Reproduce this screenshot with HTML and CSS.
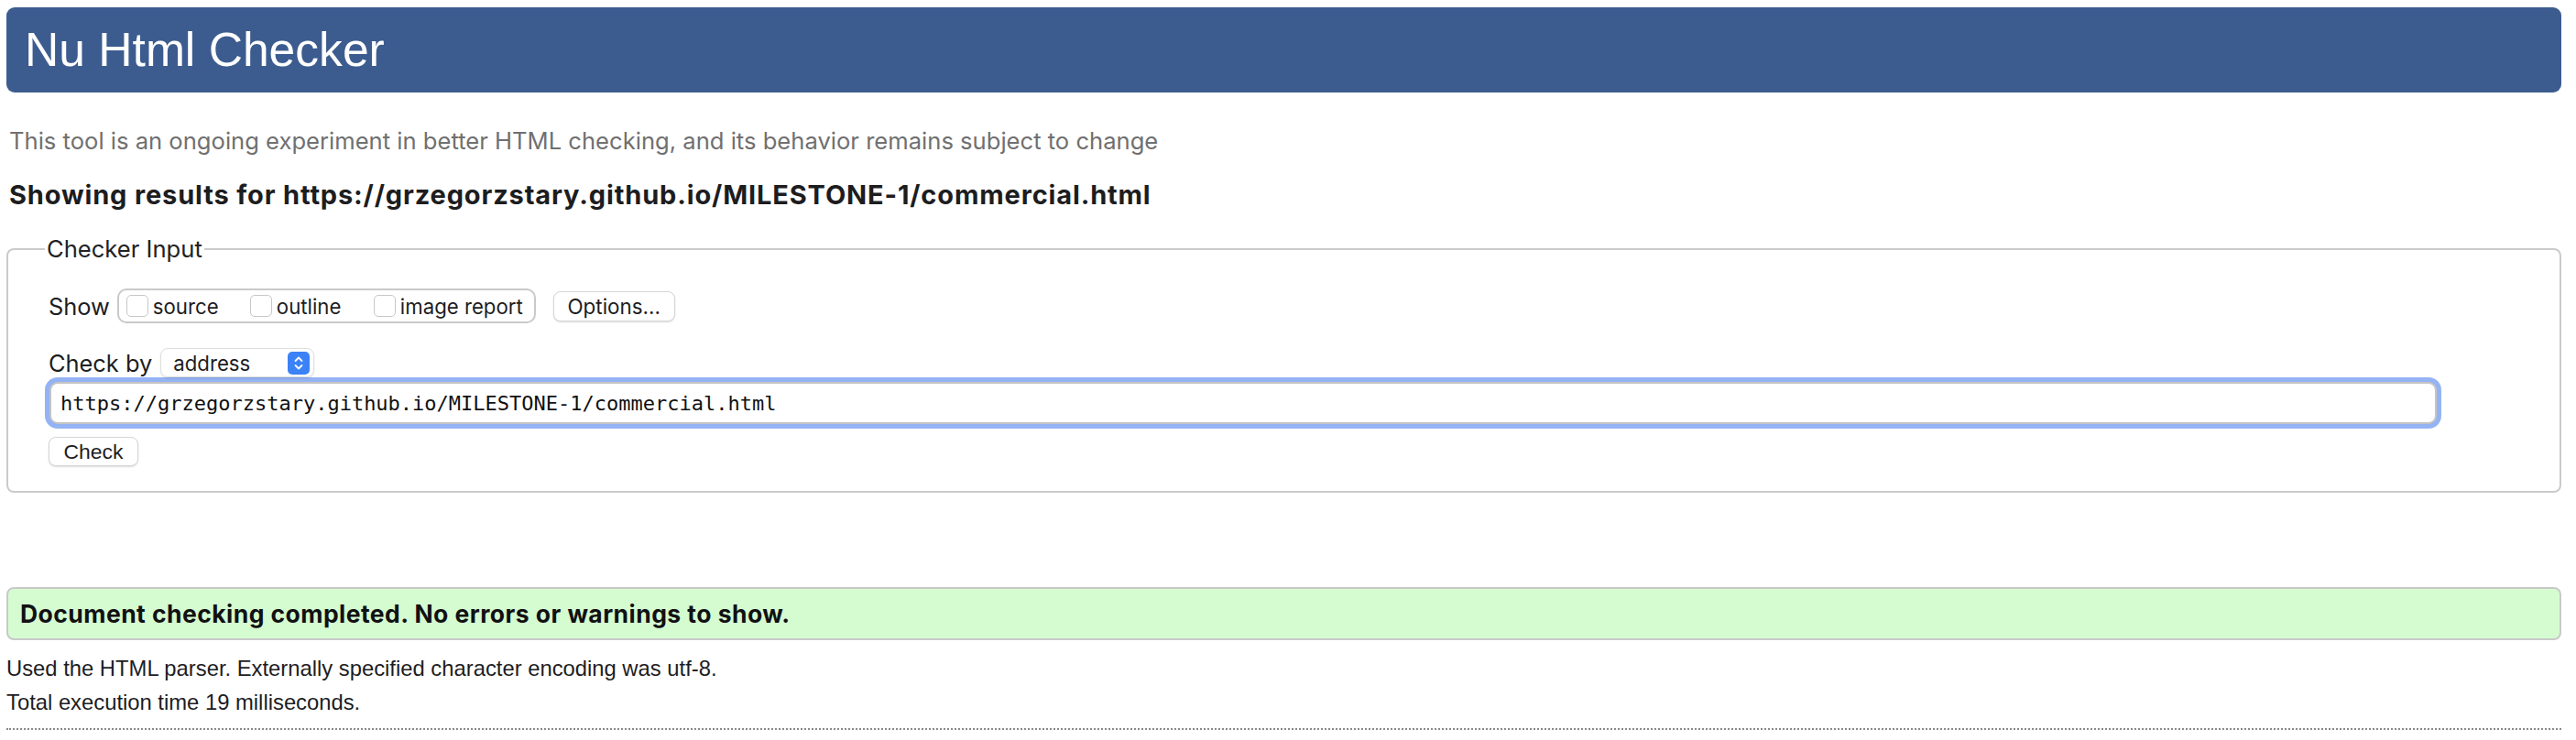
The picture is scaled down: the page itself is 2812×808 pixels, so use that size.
FILE: index.html
```html
<!DOCTYPE html>
<html lang="en">
<head>
<meta charset="utf-8">
<title>Showing results for https://grzegorzstary.github.io/MILESTONE-1/commercial.html - Nu Html Checker</title>
<link rel="stylesheet" href="styles.css">
</head>
<body>
<header class="masthead"><h1>Nu Html Checker</h1></header>
<p class="intro">This tool is an ongoing experiment in better HTML checking, and its behavior remains subject to change</p>
<h2 class="results">Showing results for https://grzegorzstary.github.io/MILESTONE-1/commercial.html</h2>
<form class="checker-form">
<fieldset class="checker">
<legend class="checker-legend">Checker Input</legend>
<div class="row row-show">
<span class="label label-show">Show</span>
<div class="choices">
<label class="choice"><input type="checkbox" class="box"><span>source</span></label>
<label class="choice"><input type="checkbox" class="box"><span>outline</span></label>
<label class="choice choice-last"><input type="checkbox" class="box"><span>image report</span></label>
</div>
<button type="button" class="btn btn-options">Options...</button>
</div>
<div class="row row-by">
<span class="label label-by">Check by</span>
<span class="select"><span class="select-text">address</span><span class="stepper"><svg width="24" height="25" viewBox="0 0 24 25"><path d="M8.5 10 L12 6.5 L15.5 10" fill="none" stroke="#fff" stroke-width="1.8" stroke-linecap="round" stroke-linejoin="round"/><path d="M8.5 15 L12 18.5 L15.5 15" fill="none" stroke="#fff" stroke-width="1.8" stroke-linecap="round" stroke-linejoin="round"/></svg></span></span>
</div>
<input type="text" class="url" value="https://grzegorzstary.github.io/MILESTONE-1/commercial.html">
<button type="button" class="btn btn-check">Check</button>
</fieldset>
</form>
<p class="success">Document checking completed. No errors or warnings to show.</p>
<p class="meta">Used the HTML parser. Externally specified character encoding was utf-8.</p>
<p class="meta">Total execution time 19 milliseconds.</p>
<hr class="rule">
</body>
</html>
```
FILE: styles.css
```css
html { background: #fff; }
body {
  margin: 8px 16px 0 7px;
  font-family: Inter, "Liberation Sans", sans-serif;
  color: #1d1d1f;
}
.masthead {
  height: 93px;
  background: #3c5c8f;
  border-radius: 9px;
  padding-left: 20px;
}
.masthead h1 {
  margin: 0;
  font: 400 51.6px/93px "Liberation Sans", Arial, sans-serif;
  color: #fff;
}
.intro {
  margin: 35px 0 0 3px;
  font-size: 25.6px;
  line-height: 36px;
  color: #707070;
}
.results {
  margin: 22px 0 0 3px;
  font-size: 29px;
  font-weight: 700;
  letter-spacing: 0.85px;
  line-height: 38px;
  color: #1d1d1f;
}
.checker-form { margin: 25px 0 0; }
.checker {
  margin: 0;
  border: 2px solid #cbcbcb;
  border-radius: 8px;
  padding: 28px 0 27px 44px;
}
.checker-legend {
  font-size: 25.6px;
  line-height: 30px;
  padding: 0 2px;
  margin-left: -4px;
  color: #222;
}
.row { display: flex; align-items: center; }
.row-show { height: 38px; }
.label { font-size: 25.4px; color: #1d1d1f; }
.label-show { margin-right: 8px; }
.choices {
  display: flex;
  align-items: center;
  height: 38px;
  box-sizing: border-box;
  border: 2px solid #c9c9c9;
  border-radius: 10px;
  padding: 0 12px 0 8px;
}
.choice {
  display: flex;
  align-items: center;
  gap: 5px;
  width: 135px;
  font-size: 22.2px;
}
.choice-last { width: auto; }
.box {
  appearance: none;
  margin: 0;
  width: 24px;
  height: 24px;
  box-sizing: border-box;
  border: 1.5px solid #c8c8c8;
  border-radius: 5px;
  background: #fff;
}
.btn {
  box-sizing: border-box;
  background: #fff;
  border: 1px solid #d6d6d6;
  border-radius: 8px;
  box-shadow: 0 1px 2px rgba(0,0,0,0.14);
  color: #1d1d1f;
  padding: 0;
}
.btn-options {
  margin-left: 19px;
  width: 133px;
  height: 33px;
  font: 400 22.4px Inter, sans-serif;
}
.row-by { height: 32px; margin-top: 27px; }
.label-by { margin-right: 9px; }
.select {
  display: flex;
  align-items: center;
  justify-content: space-between;
  box-sizing: border-box;
  width: 168px;
  height: 32px;
  padding: 0 4px 0 13px;
  border: 1px solid #dedede;
  border-radius: 8px;
  box-shadow: 0 1px 2px rgba(0,0,0,0.12);
  font-size: 22.2px;
}
.stepper {
  display: flex;
  width: 24px;
  height: 25px;
  border-radius: 5px;
  background: #3b82f6;
}
.url {
  display: block;
  margin: 5px 0 0 1px;
  box-sizing: border-box;
  width: 2606px;
  height: 46px;
  padding: 0 0 0 10px;
  border: 2px solid #c4c4c4;
  border-radius: 9px;
  box-shadow: 0 0 0 5px #94b3f4;
  outline: none;
  font: 400 22px "DejaVu Sans Mono", monospace;
  color: #111;
}
.btn-check {
  display: block;
  margin-top: 14px;
  width: 98px;
  height: 32px;
  font: 400 22.9px "Liberation Sans", Arial, sans-serif;
}
.success {
  margin: 103px 0 0;
  height: 58px;
  box-sizing: border-box;
  border: 2px solid #c9c9c9;
  border-radius: 8px;
  background: #d5fbd1;
  padding-left: 13px;
  font-size: 26.5px;
  font-weight: 700;
  letter-spacing: 0.45px;
  line-height: 54px;
  color: #111;
}
.meta {
  margin: 0;
  font: 400 23.8px/37px "Liberation Sans", Arial, sans-serif;
  color: #1d1d1f;
}
.success + .meta { margin-top: 12px; }
.rule {
  margin: 10px 0 0;
  border: 0;
  border-top: 2px dotted #8a8a8a;
}
```
